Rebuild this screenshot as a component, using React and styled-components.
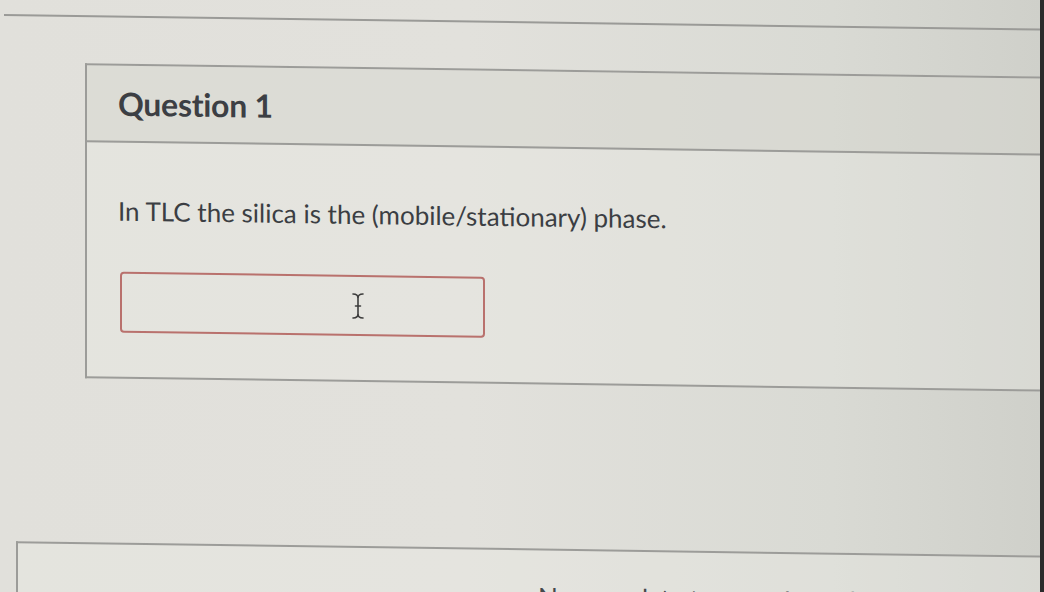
import React from 'react'
import styled, { createGlobalStyle } from 'styled-components'

const Global = createGlobalStyle`
  html, body {
    margin: 0;
    padding: 0;
    height: 100%;
    overflow: hidden;
    background: #dfded9;
    font-family: Lato, "Open Sans", "Liberation Sans", sans-serif;
  }
`

const Frame = styled.div`
  display: flex;
  height: 100vh;
`

const Screen = styled.div`
  flex: 1;
  overflow: hidden;
  background: linear-gradient(90deg, #e1e0db 0%, #e2e1dc 45%, #d9dad4 80%, #cfd0ca 100%);
`

const Bezel = styled.div`
  width: 4px;
  background: #2b2b2b;
`

/* the display sits at a slight angle, so horizontals drift downward to the right */
const Sheet = styled.div`
  padding-top: 14px;
  width: 1060px;
  transform: skewY(0.8deg);
  transform-origin: 0 0;
`

const Rule = styled.div`
  height: 2px;
  margin-left: 4px;
  background: #9a9a97;
`

const Card = styled.section`
  margin: ${p => p.$top}px 0 0 ${p => p.$left}px;
  border: 2px solid #9c9c99;
  border-right: none;
  background: rgba(236, 235, 230, 0.35);
`

const Header = styled.header`
  height: 75px;
  display: flex;
  align-items: center;
  padding-left: 31px;
  background: rgba(190, 189, 184, 0.22);
  border-bottom: 2px solid #9c9c99;
`

const Title = styled.h2`
  margin: 0;
  font-size: 32px;
  font-weight: 700;
  color: #3c3f44;
  letter-spacing: -0.3px;
`

const Body = styled.div`
  padding: 53px 32px 44px 31px;
`

const Prompt = styled.p`
  margin: 0;
  font-size: 26px;
  line-height: 30px;
  color: #3b3e43;
`

const Answer = styled.div`
  margin: 46px 0 0 2px;
  width: 365px;
  height: 61px;
  box-sizing: border-box;
  border: 2px solid #b9716d;
  border-radius: 4px;
  display: flex;
  align-items: center;
  justify-content: center;
  padding-left: 110px;
`

const Status = styled.div`
  padding: 30px 0 0 520px;
  font-size: 26px;
  color: #45484c;
  white-space: nowrap;
`

function Caret() {
  return (
    <svg width="14" height="28" viewBox="0 0 14 28" fill="none" stroke="#3d3d3d" strokeWidth="1.6" strokeLinecap="round">
      <path d="M2 2 Q7 2 7 6 Q7 2 12 2" />
      <path d="M7 6 V22" />
      <path d="M4.5 14 H9.5" />
      <path d="M2 26 Q7 26 7 22 Q7 26 12 26" />
    </svg>
  )
}

export default function App() {
  return (
    <Frame>
      <Global />
      <Screen>
        <Sheet>
          <Rule />
          <Card $top={46} $left={85}>
            <Header>
              <Title>Question 1</Title>
            </Header>
            <Body>
              <Prompt>In TLC the silica is the (mobile/stationary) phase.</Prompt>
              <Answer>
                <Caret />
              </Answer>
            </Body>
          </Card>
          <Card $top={164} $left={16}>
            <Status>No new data to save. Last checked at 10:32</Status>
          </Card>
        </Sheet>
      </Screen>
      <Bezel />
    </Frame>
  )
}
